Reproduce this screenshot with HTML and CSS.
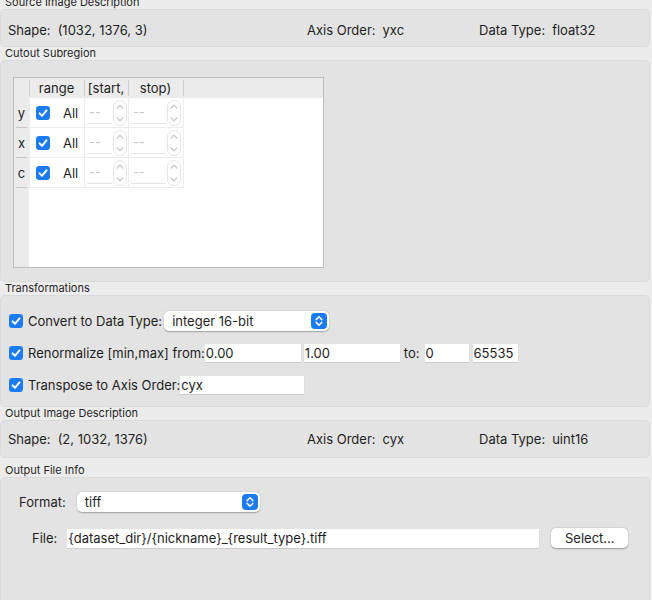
FILE: index.html
```html
<!DOCTYPE html>
<html lang="en">
<head>
    <meta charset="UTF-8">
    <meta name="viewport" content="width=device-width, initial-scale=1.0">
    <title>Export Image</title>
    <link rel="stylesheet" href="styles.css">
</head>
<body>
    <div class="panel">
        <section class="group">
            <div class="group-title">Source Image Description</div>
            <div class="group-box info-row first">
                <div class="info"><span>Shape:</span><span>(1032, 1376, 3)</span></div>
                <div class="info"><span>Axis Order:</span><span>yxc</span></div>
                <div class="info"><span>Data Type:</span><span>float32</span></div>
            </div>
        </section>

        <section class="group">
            <div class="group-title">Cutout Subregion</div>
            <div class="group-box cutout">
                <div class="table">
                    <div class="corner"></div>
                    <div class="hcell">range</div>
                    <div class="hcell">[start,</div>
                    <div class="hcell">stop)</div>
                    <div class="hcell"></div>

                    <div class="vcell">y</div>
                    <div class="cell range-cell">
                        <svg class="check" viewBox="0 0 14 14"><rect width="14" height="14" rx="3.2"/><path d="M3.6 7.4 L6 9.8 L10.5 4.3"/></svg>
                        <span>All</span>
                    </div>
                    <div class="cell spin-cell">
                        <span class="spin-edit short">--</span>
                        <svg class="spin-arrows" viewBox="0 0 14 26"><rect x="0.5" y="0.5" width="13" height="25" rx="6.5"/><path d="M4.2 8 L7 5.2 L9.8 8 M4.2 18 L7 20.8 L9.8 18"/></svg>
                    </div>
                    <div class="cell spin-cell">
                        <span class="spin-edit">--</span>
                        <svg class="spin-arrows" viewBox="0 0 14 26"><rect x="0.5" y="0.5" width="13" height="25" rx="6.5"/><path d="M4.2 8 L7 5.2 L9.8 8 M4.2 18 L7 20.8 L9.8 18"/></svg>
                    </div>
                    <div class="fill"></div>

                    <div class="vcell">x</div>
                    <div class="cell range-cell">
                        <svg class="check" viewBox="0 0 14 14"><rect width="14" height="14" rx="3.2"/><path d="M3.6 7.4 L6 9.8 L10.5 4.3"/></svg>
                        <span>All</span>
                    </div>
                    <div class="cell spin-cell">
                        <span class="spin-edit short">--</span>
                        <svg class="spin-arrows" viewBox="0 0 14 26"><rect x="0.5" y="0.5" width="13" height="25" rx="6.5"/><path d="M4.2 8 L7 5.2 L9.8 8 M4.2 18 L7 20.8 L9.8 18"/></svg>
                    </div>
                    <div class="cell spin-cell">
                        <span class="spin-edit">--</span>
                        <svg class="spin-arrows" viewBox="0 0 14 26"><rect x="0.5" y="0.5" width="13" height="25" rx="6.5"/><path d="M4.2 8 L7 5.2 L9.8 8 M4.2 18 L7 20.8 L9.8 18"/></svg>
                    </div>
                    <div class="fill"></div>

                    <div class="vcell">c</div>
                    <div class="cell range-cell">
                        <svg class="check" viewBox="0 0 14 14"><rect width="14" height="14" rx="3.2"/><path d="M3.6 7.4 L6 9.8 L10.5 4.3"/></svg>
                        <span>All</span>
                    </div>
                    <div class="cell spin-cell">
                        <span class="spin-edit short">--</span>
                        <svg class="spin-arrows" viewBox="0 0 14 26"><rect x="0.5" y="0.5" width="13" height="25" rx="6.5"/><path d="M4.2 8 L7 5.2 L9.8 8 M4.2 18 L7 20.8 L9.8 18"/></svg>
                    </div>
                    <div class="cell spin-cell">
                        <span class="spin-edit">--</span>
                        <svg class="spin-arrows" viewBox="0 0 14 26"><rect x="0.5" y="0.5" width="13" height="25" rx="6.5"/><path d="M4.2 8 L7 5.2 L9.8 8 M4.2 18 L7 20.8 L9.8 18"/></svg>
                    </div>
                    <div class="fill"></div>

                    <div class="vcell empty"></div>
                    <div class="body-fill"></div>
                </div>
            </div>
        </section>

        <section class="group">
            <div class="group-title">Transformations</div>
            <div class="group-box transforms">
                <div class="trow">
                    <label class="check-label">
                        <svg class="check" viewBox="0 0 14 14"><rect width="14" height="14" rx="3.2"/><path d="M3.6 7.4 L6 9.8 L10.5 4.3"/></svg>
                        Convert to Data Type:
                    </label>
                    <div class="combo dtype">
                        <span>integer 16-bit</span>
                        <svg class="combo-btn" viewBox="0 0 16 16"><rect width="16" height="16" rx="4"/><path d="M5.2 6.6 L8 3.8 L10.8 6.6 M5.2 9.4 L8 12.2 L10.8 9.4"/></svg>
                    </div>
                </div>
                <div class="trow">
                    <label class="check-label">
                        <svg class="check" viewBox="0 0 14 14"><rect width="14" height="14" rx="3.2"/><path d="M3.6 7.4 L6 9.8 L10.5 4.3"/></svg>
                        Renormalize [min,max] from:
                    </label>
                    <input class="field from-min" type="text" value="0.00" readonly>
                    <input class="field from-max" type="text" value="1.00" readonly>
                    <span class="to-label">to:</span>
                    <input class="field to-min" type="text" value="0" readonly>
                    <input class="field to-max" type="text" value="65535" readonly>
                </div>
                <div class="trow">
                    <label class="check-label">
                        <svg class="check" viewBox="0 0 14 14"><rect width="14" height="14" rx="3.2"/><path d="M3.6 7.4 L6 9.8 L10.5 4.3"/></svg>
                        Transpose to Axis Order:
                    </label>
                    <input class="field axis-order" type="text" value="cyx" readonly>
                </div>
            </div>
        </section>

        <section class="group">
            <div class="group-title">Output Image Description</div>
            <div class="group-box info-row">
                <div class="info"><span>Shape:</span><span>(2, 1032, 1376)</span></div>
                <div class="info"><span>Axis Order:</span><span>cyx</span></div>
                <div class="info"><span>Data Type:</span><span>uint16</span></div>
            </div>
        </section>

        <section class="group file-group">
            <div class="group-title">Output File Info</div>
            <div class="group-box file-info">
                <div class="frow">
                    <span class="format-label">Format:</span>
                    <div class="combo format">
                        <span>tiff</span>
                        <svg class="combo-btn" viewBox="0 0 16 16"><rect width="16" height="16" rx="4"/><path d="M5.2 6.6 L8 3.8 L10.8 6.6 M5.2 9.4 L8 12.2 L10.8 9.4"/></svg>
                    </div>
                </div>
                <div class="frow file-row">
                    <span class="file-label">File:</span>
                    <input class="field file-path" type="text" value="{dataset_dir}/{nickname}_{result_type}.tiff" readonly>
                    <button type="button" class="select-btn">Select...</button>
                </div>
            </div>
        </section>
    </div>
</body>
</html>
```

FILE: styles.css
```css
body {
    margin: 0;
    background-color: #ececec;
    font-family: Inter, 'Liberation Sans', Arial, sans-serif;
    font-size: 13px;
    color: #1f1f1f;
    overflow: hidden;
}

.panel {
    width: 650px;
    margin-top: -4px;
}

.group-title {
    height: 13px;
    line-height: 13px;
    font-size: 11px;
    padding-left: 5px;
    color: #262626;
}

.group-box {
    background-color: #e3e3e3;
    border: 1px solid #dadada;
    border-radius: 5px;
    box-sizing: border-box;
}

/* description rows */
.info-row {
    height: 38px;
    display: grid;
    grid-template-columns: 299px 172px 1fr;
    align-items: center;
    padding-left: 7px;
}

.info-row.first {
    padding-top: 3px;
}

.info {
    display: flex;
    gap: 7px;
}

/* cutout table */
.cutout {
    height: 222px;
    padding: 16px 0 0 12px;
}

.table {
    width: 311px;
    height: 191px;
    box-sizing: border-box;
    border: 1px solid #bdbdbd;
    background-color: #fff;
    display: grid;
    grid-template-columns: 15px 55px 44px 55px 1fr;
    grid-template-rows: 20px 30px 30px 30px 1fr;
}

.corner,
.hcell,
.vcell {
    background-color: #ebebeb;
}

.hcell {
    position: relative;
    display: flex;
    align-items: center;
    justify-content: center;
}

.hcell::before {
    content: '';
    position: absolute;
    left: 0;
    top: 2px;
    bottom: 2px;
    width: 1px;
    background-color: #cdcdcd;
}

.vcell {
    position: relative;
    display: flex;
    align-items: center;
    justify-content: center;
}

.vcell::after {
    content: '';
    position: absolute;
    left: 2px;
    right: 2px;
    bottom: 0;
    height: 1px;
    background-color: #c6c6c6;
}

.vcell.empty::after {
    display: none;
}

.cell {
    border-left: 1px solid #ededed;
    border-bottom: 1px solid #ededed;
    display: flex;
    align-items: center;
}

.range-cell {
    padding-left: 6px;
    gap: 13px;
}

.fill {
    border-left: 1px solid #ededed;
}

.body-fill {
    grid-column: 2 / -1;
}

.spin-cell {
    padding-left: 2px;
    gap: 1px;
}

.spin-edit {
    width: 35px;
    height: 23px;
    line-height: 23px;
    box-sizing: border-box;
    padding-left: 2px;
    border-bottom: 1px solid #e5e5e5;
    color: #c8c8c8;
}

.spin-edit.short {
    width: 25px;
}

.spin-arrows {
    width: 14px;
    height: 26px;
}

.spin-arrows rect {
    fill: #fff;
    stroke: #e4e4e4;
}

.spin-arrows path {
    fill: none;
    stroke: #c3c3c3;
    stroke-width: 1.2;
    stroke-linecap: round;
    stroke-linejoin: round;
}

/* checkbox */
.check {
    width: 14px;
    height: 14px;
    flex-shrink: 0;
}

.check rect {
    fill: #1a7bf3;
}

.check path {
    fill: none;
    stroke: #fff;
    stroke-width: 2;
    stroke-linecap: round;
    stroke-linejoin: round;
}

/* transformations */
.transforms {
    height: 112px;
    padding: 15px 0 0 8px;
    display: flex;
    flex-direction: column;
    gap: 12px;
}

.trow {
    height: 20px;
    display: flex;
    align-items: center;
}

.check-label {
    display: flex;
    align-items: center;
    gap: 5px;
    white-space: nowrap;
}

.combo {
    height: 20px;
    box-sizing: border-box;
    background-color: #fff;
    border-radius: 5px;
    box-shadow: 0 0.5px 1.5px rgba(0, 0, 0, 0.3);
    display: flex;
    align-items: center;
    justify-content: space-between;
    padding: 0 2px 0 8px;
}

.combo-btn {
    width: 16px;
    height: 16px;
}

.combo-btn rect {
    fill: #1a7bf3;
}

.combo-btn path {
    fill: none;
    stroke: #fff;
    stroke-width: 1.5;
    stroke-linecap: round;
    stroke-linejoin: round;
}

.dtype {
    width: 165px;
    margin-left: 2px;
}

.field {
    height: 18px;
    box-sizing: border-box;
    border: none;
    background-color: #fff;
    box-shadow: 0 1px 0 #cbcbcb, 1px 0 0 #dedede;
    font-family: inherit;
    font-size: 13px;
    color: #1c1c1c;
    padding: 0 1px;
    outline: none;
}

.from-min {
    width: 96px;
    margin-left: 0;
}

.from-max {
    width: 96px;
    margin-left: 3px;
}

.to-label {
    margin-left: 4px;
}

.to-min {
    width: 44px;
    margin-left: 5px;
}

.to-max {
    width: 45px;
    margin-left: 4px;
}

.axis-order {
    width: 124px;
    margin-left: 0;
}

/* output file info */
.file-group {
    margin-top: 6px;
}

.file-info {
    height: 140px;
    padding: 14px 0 0 18px;
    display: flex;
    flex-direction: column;
    gap: 16px;
}

.frow {
    height: 20px;
    display: flex;
    align-items: center;
}

.format {
    width: 183px;
    margin-left: 11px;
}

.file-row {
    margin-left: 13px;
}

.file-path {
    width: 472px;
    height: 19px;
    margin-left: 10px;
}

.select-btn {
    width: 77px;
    height: 20px;
    margin-left: 12px;
    border: none;
    border-radius: 5px;
    background-color: #fff;
    box-shadow: 0 0.5px 1.5px rgba(0, 0, 0, 0.35);
    font-family: inherit;
    font-size: 13px;
    color: #242424;
    padding: 0;
}
```
